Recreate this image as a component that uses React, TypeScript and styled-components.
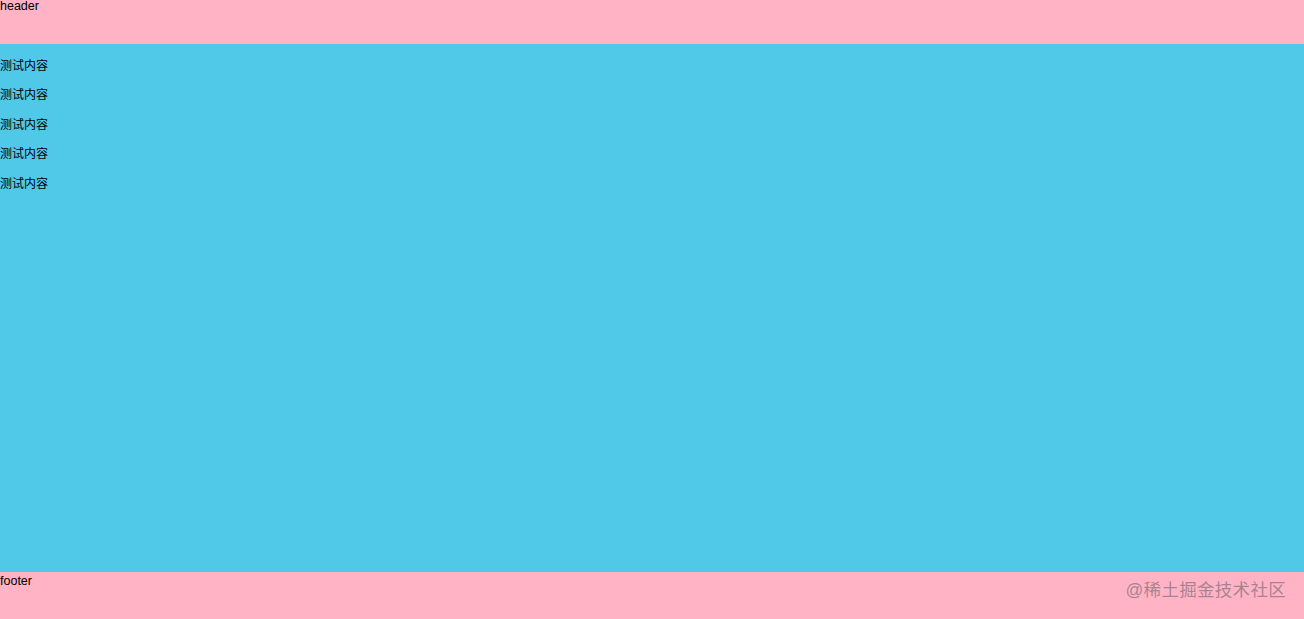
import React from "react";
import styled, { createGlobalStyle } from "styled-components";

const GlobalStyle = createGlobalStyle`
  html, body, #root {
    margin: 0;
    padding: 0;
    height: 100%;
  }
  body {
    font-family: "Helvetica Neue", "Liberation Sans", "Noto Sans CJK SC", sans-serif;
    font-size: 12px;
    color: #000;
  }
`;

const Page = styled.div`
  display: flex;
  flex-direction: column;
  height: 100vh;
  position: relative;
`;

const Header = styled.header`
  height: 44px;
  flex-shrink: 0;
  background: #ffb3c4;
  font-size: 12.5px;
  line-height: 12px;
`;

const Main = styled.main`
  flex: 1;
  padding-top: 1.5px;
  background: #50c9e8;
  overflow: hidden;
`;

const Line = styled.p`
  margin: 12px 0;
  line-height: 17.5px;
`;

const Footer = styled.footer`
  height: 47px;
  flex-shrink: 0;
  background: #ffb3c4;
  font-size: 12.5px;
  line-height: 19px;
`;

const Watermark = styled.div`
  position: absolute;
  right: 18px;
  bottom: 18px;
  font-size: 17.5px;
  color: rgba(90, 90, 100, 0.55);
  letter-spacing: 0.3px;
  pointer-events: none;
`;

const lines = Array.from({ length: 5 }, () => "测试内容");

function App() {
  return (
    <>
      <GlobalStyle />
      <Page>
        <Header>header</Header>
        <Main>
          {lines.map((text, i) => (
            <Line key={i}>{text}</Line>
          ))}
        </Main>
        <Footer>footer</Footer>
        <Watermark>@稀土掘金技术社区</Watermark>
      </Page>
    </>
  );
}

export default App;
